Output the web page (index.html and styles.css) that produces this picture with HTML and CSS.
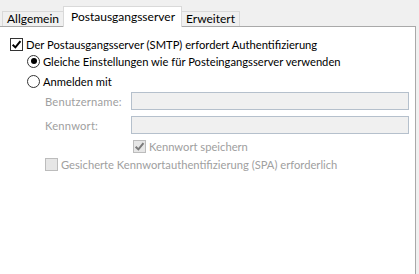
FILE: index.html
```html
<!DOCTYPE html>
<html lang="de">
<head>
    <meta charset="UTF-8">
    <title>Postausgangsserver</title>
    <link rel="stylesheet" href="styles.css">
</head>
<body>
    <div class="tabs">
        <div class="tab">Allgemein</div>
        <div class="tab active">Postausgangsserver</div>
        <div class="tab">Erweitert</div>
    </div>
    <div class="panel">
        <label class="row first">
            <span class="box"><svg viewBox="0 0 10 10"><path d="M1.5 5.2 L4 7.6 L8.6 2" /></svg></span>
            Der Postausgangsserver (SMTP) erfordert Authentifizierung
        </label>
        <label class="row radio-row">
            <span class="radio on"></span>
            Gleiche Einstellungen wie für Posteingangsserver verwenden
        </label>
        <label class="row radio-row">
            <span class="radio"></span>
            Anmelden mit
        </label>
        <div class="fields">
            <span class="field-label">Benutzername:</span>
            <div class="input"></div>
            <span class="field-label">Kennwort:</span>
            <div class="input"></div>
        </div>
        <label class="row disabled save">
            <span class="box"><svg viewBox="0 0 10 10"><path d="M1.5 5.2 L4 7.6 L8.6 2" /></svg></span>
            Kennwort speichern
        </label>
        <label class="row disabled spa">
            <span class="box"></span>
            Gesicherte Kennwortauthentifizierung (SPA) erforderlich
        </label>
    </div>
</body>
</html>
```

FILE: styles.css
```css
body {
    margin: 0;
    background: #f0f0f0;
    font-family: Lato, "Noto Sans", sans-serif;
    font-size: 11.2px;
    color: #000;
    overflow: hidden;
}

.tabs {
    display: flex;
    align-items: flex-end;
    height: 26px;
    padding-left: 2px;
}

.tab {
    height: 14px;
    line-height: 14px;
    padding: 0 4px;
    border: 1px solid #d9d9d9;
    border-bottom: none;
    background: #f0f0f0;
    color: #000;
    font-size: 12px;
}

.tab.active {
    height: 20px;
    line-height: 20px;
    padding: 0 6px 0 7px;
    border-color: #d9d9d9;
    background: #fff;
    margin-bottom: -1px;
    position: relative;
    z-index: 1;
}

.tab + .tab.active {
    margin-left: -1px;
}

.tab.active + .tab {
    margin-left: -1px;
}

.panel {
    width: 416px;
    height: 260px;
    background: #fff;
    border-top: 1px solid #a9a9a9;
    border-right: 1px solid #a9a9a9;
    box-sizing: border-box;
    padding: 10px 0 0 10px;
}

.row {
    display: flex;
    align-items: center;
    white-space: nowrap;
}

.row.first {
    height: 14px;
}

.radio-row {
    height: 20px;
    padding-left: 17px;
}

.box {
    width: 11px;
    height: 11px;
    border: 1px solid #333;
    background: #fff;
    margin-right: 3px;
    flex: none;
    display: flex;
}

.box svg {
    width: 11px;
    height: 11px;
}

.box path {
    fill: none;
    stroke: #000;
    stroke-width: 1.8;
}

.radio {
    width: 11px;
    height: 11px;
    border: 1px solid #333;
    border-radius: 50%;
    margin-right: 3px;
    flex: none;
    display: flex;
    align-items: center;
    justify-content: center;
}

.radio.on::after {
    content: "";
    width: 6px;
    height: 6px;
    border-radius: 50%;
    background: #000;
}

.fields {
    display: grid;
    grid-template-columns: 86px 278px;
    row-gap: 6px;
    margin: 1px 0 0 35px;
    align-items: center;
}

.field-label {
    color: #a0a0a0;
    padding-top: 1px;
    letter-spacing: 0.2px;
}

.input {
    height: 16px;
    border: 1px solid #b5c0cc;
    background: #f0f0f0;
}

.disabled {
    color: #a0a0a0;
}

.disabled .box {
    border-color: #bcbcbc;
    background: #e6e6e6;
}

.disabled .box path {
    stroke: #7a7a7a;
}

.save {
    height: 12px;
    margin: 6px 0 0 123px;
}

.spa {
    height: 12px;
    margin: 6px 0 0 35px;
}
```
